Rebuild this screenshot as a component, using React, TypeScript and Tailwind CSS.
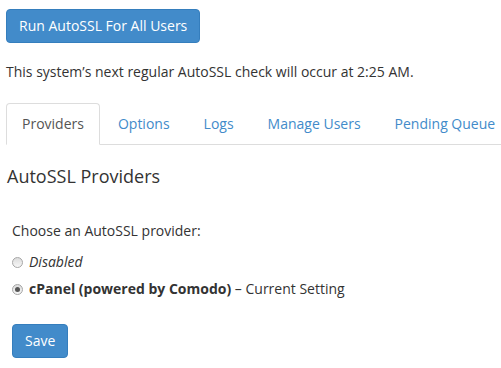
import React from 'react';

const tabs = ['Providers', 'Options', 'Logs', 'Manage Users', 'Pending Queue'];

const providers = [
  { id: 'disabled', label: 'Disabled', checked: false },
  { id: 'cpanel', label: 'cPanel (powered by Comodo)', checked: true },
];

const Radio: React.FC<{ checked: boolean }> = ({ checked }) => (
  <span className="w-[11px] h-[11px] rounded-full border border-[#a6a6a6] bg-gradient-to-b from-[#dcdcdc] to-[#f7f7f7] flex items-center justify-center shrink-0">
    {checked && <span className="w-[5px] h-[5px] rounded-full bg-[#555]" />}
  </span>
);

const App: React.FC = () => {
  return (
    <div className="w-[501px] h-[368px] bg-white overflow-hidden pl-[6px] pt-[9px] text-[14px] leading-[20px] text-[#333]" style={{ fontFamily: '"Open Sans", sans-serif' }}>
      <button className="h-[34px] px-[12px] bg-[#428bca] border border-[#357ebd] rounded-[4px] text-white text-[14px]">
        Run AutoSSL For All Users
      </button>
      <p className="mt-[19px]">This system’s next regular AutoSSL check will occur at 2:25 AM.</p>

      <ul className="mt-[21px] flex border-b border-[#ddd]">
        {tabs.map((t, i) => (
          <li key={t} className="mr-[2px] -mb-px">
            <span
              className={
                i === 0
                  ? 'block px-[15px] py-[10px] border border-[#ddd] border-b-white rounded-t-[4px] bg-white text-[#555] whitespace-nowrap'
                  : 'block px-[15px] py-[10px] border border-transparent text-[#428bca] whitespace-nowrap'
              }
            >
              {t}
            </span>
          </li>
        ))}
      </ul>

      <h4 className="mt-[21px] pl-px text-[18px] leading-[20px] text-[#333]">AutoSSL Providers</h4>

      <div className="pl-[6px]">
        <p className="mt-[35px]">Choose an AutoSSL provider:</p>
        <div className="mt-[11px] flex flex-col gap-[7px]">
          {providers.map((p) => (
            <label key={p.id} className="flex items-center gap-[6px] h-[20px]">
              <Radio checked={p.checked} />
              {p.checked ? (
                <span>
                  <b className="font-bold">{p.label}</b> – Current Setting
                </span>
              ) : (
                <i>{p.label}</i>
              )}
            </label>
          ))}
        </div>
        <button className="mt-[25px] h-[34px] px-[12px] bg-[#428bca] border border-[#357ebd] rounded-[4px] text-white text-[14px]">
          Save
        </button>
      </div>
    </div>
  );
};

export default App;
